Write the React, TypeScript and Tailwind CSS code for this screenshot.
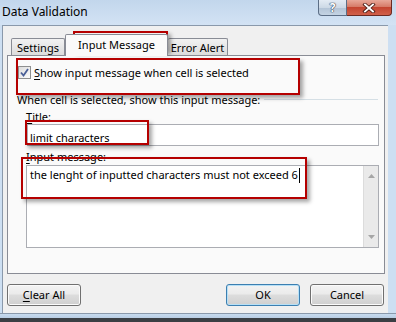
import React from "react";

const font = { fontFamily: '"Noto Sans", "Open Sans", sans-serif' };

function RedBox({ className }: { className: string }) {
  return (
    <div
      className={`absolute border-2 border-[#b50000] shadow-[3px_3px_4px_rgba(0,0,0,0.35)] pointer-events-none ${className}`}
    />
  );
}

function WinButton({
  label,
  accel,
  focused,
}: {
  label: string;
  accel?: boolean;
  focused?: boolean;
}) {
  return (
    <button
      className={`w-[74px] h-[22px] rounded-[3px] border text-[11px] text-black flex items-center justify-center bg-[#e5e5e5] bg-[linear-gradient(to_bottom,#f3f3f3_0%,#ebebeb_45%,#dddddd_50%,#cfcfcf_100%)] ${
        focused
          ? "border-[#3c7fb1] shadow-[inset_0_0_0_1px_#b7e0f6]"
          : "border-[#707070] shadow-[inset_0_0_0_1px_#fbfbfb]"
      }`}
    >
      {accel ? (
        <>
          <span className="underline underline-offset-2">{label[0]}</span>
          {label.slice(1)}
        </>
      ) : (
        label
      )}
    </button>
  );
}

export default function App() {
  return (
    <div
      className="relative w-[396px] h-[322px] overflow-hidden bg-[#cddff2] text-black"
      style={font}
    >
      {/* title bar */}
      <div className="h-[25px] flex items-start justify-between bg-[#cadcf0] bg-[linear-gradient(to_bottom,#c2d6ec,#d3e3f4)]">
        <div className="pl-[2px] pt-[3px] text-[12px] leading-[18px] text-black">
          Data Validation
        </div>
        <div className="flex mr-[4px]">
          <div className="w-[29px] h-[16px] rounded-bl-[4px] border border-t-0 border-[#5c6e86] bg-[#c6d4e4] bg-[linear-gradient(to_bottom,#e3ebf4_0%,#cdd9e6_50%,#b2c3d6_51%,#c4d3e3_100%)] flex items-center justify-center">
            <span className="text-[12px] font-bold leading-none text-white [text-shadow:0_0_1px_#2c3c52,0_0_1px_#2c3c52,0_0_1px_#2c3c52]">
              ?
            </span>
          </div>
          <div className="w-[45px] h-[16px] rounded-br-[4px] border border-l-0 border-t-0 border-[#6b2a22] bg-[#c9503d] bg-[linear-gradient(to_bottom,#e8a899_0%,#d67b68_45%,#c44530_50%,#d0604a_100%)] flex items-center justify-center">
            <svg width="14" height="10" viewBox="0 0 14 10">
              <path
                d="M3 1.5 L11 8.5 M11 1.5 L3 8.5"
                stroke="#4a1c14"
                strokeWidth="3.6"
                strokeLinecap="square"
              />
              <path
                d="M3 1.5 L11 8.5 M11 1.5 L3 8.5"
                stroke="#ffffff"
                strokeWidth="1.9"
                strokeLinecap="square"
              />
            </svg>
          </div>
        </div>
      </div>

      {/* dialog body */}
      <div className="ml-[2px] w-[386px] h-[288px] bg-[#f0f0f0] border-t border-l border-[#8a99ab] px-[4px]">
        {/* tabs */}
        <div className="h-[29px] flex items-end pl-[4px] text-[11px]">
          <div className="w-[54px] h-[17px] border border-b-0 border-[#898c95] rounded-t-[2px] bg-[#e8e8e8] bg-[linear-gradient(to_bottom,#f2f2f2,#dcdcdc)] flex items-center justify-center leading-none">
            Settings
          </div>
          <div className="relative z-10 -mb-px w-[103px] h-[22px] border border-b-0 border-[#898c95] rounded-t-[2px] bg-[#fafafa] flex items-center justify-center pb-[2px] leading-none">
            Input Message
          </div>
          <div className="w-[60px] h-[17px] border border-b-0 border-l-0 border-[#898c95] rounded-t-[2px] bg-[#e8e8e8] bg-[linear-gradient(to_bottom,#f2f2f2,#dcdcdc)] flex items-center justify-center leading-none">
            Error Alert
          </div>
        </div>

        {/* tab page */}
        <div className="w-[378px] h-[219px] border border-[#898c95] bg-[#fafafa] text-[11px] flex flex-col">
          <div className="flex items-center h-[14px] mt-[9px] ml-[10px]">
            <div className="w-[13px] h-[13px] border border-[#8e8f8f] bg-[#eeeeee] bg-[linear-gradient(135deg,#dcdcdc,#fcfcfc)] flex items-center justify-center">
              <svg width="9" height="9" viewBox="0 0 9 9">
                <path
                  d="M1 4.5 L3.5 7.5 L8 1"
                  fill="none"
                  stroke="#4a5f97"
                  strokeWidth="1.8"
                />
              </svg>
            </div>
            <span className="ml-[3px] leading-none">
              <span className="underline underline-offset-2">S</span>how input
              message when cell is selected
            </span>
          </div>

          <div className="flex items-center mt-[13px] ml-[9px] mr-[6px] h-[14px]">
            <span className="leading-none whitespace-nowrap">
              When cell is selected, show this input message:
            </span>
            <div className="flex-1 h-px bg-[#d5dfe5] ml-[4px]" />
          </div>

          <div className="ml-[18px] mt-[5px] leading-none">
            <span className="underline underline-offset-2">T</span>itle:
          </div>
          <div className="ml-[19px] mt-[2px] w-[352px] h-[22px] border border-[#abadb3] bg-white flex items-center pl-[2px] pt-[4px] leading-none">
            limit characters
          </div>

          <div className="ml-[18px] mt-[5px] leading-none">
            <span className="underline underline-offset-2">I</span>nput message:
          </div>
          <div className="ml-[18px] mt-[3px] w-[353px] h-[83px] border border-[#abadb3] bg-white flex">
            <div className="flex-1 pl-[3px] pt-[2px] leading-[14px] flex items-start">
              <span>the lenght of inputted characters must not exceed 6</span>
              <span className="w-px h-[15px] bg-black ml-px" />
            </div>
            <div className="w-[15px] h-full bg-[#eaeaea] border-l border-[#dcdcdc] flex flex-col items-center justify-between py-[8px]">
              <svg width="7" height="4" viewBox="0 0 7 4">
                <path d="M0 4 L3.5 0 L7 4 Z" fill="#a6a6a6" />
              </svg>
              <svg width="7" height="4" viewBox="0 0 7 4">
                <path d="M0 0 L3.5 4 L7 0 Z" fill="#a6a6a6" />
              </svg>
            </div>
          </div>
        </div>

        {/* buttons */}
        <div className="flex items-center mt-[10px]">
          <WinButton label="Clear All" accel />
          <div className="flex-1" />
          <WinButton label="OK" focused />
          <div className="w-[10px]" />
          <WinButton label="Cancel" />
        </div>
      </div>

      {/* bottom frame */}
      <div className="h-[5px] bg-[#c0d4ea] bg-[linear-gradient(to_bottom,#c7dbef,#b9cde3)] border-t border-[#8a99ab]" />
      <div className="h-[4px] bg-[#3b3f44]" />

      {/* annotation boxes */}
      <RedBox className="left-[73px] top-[31px] w-[95px] h-[20px]" />
      <RedBox className="left-[16px] top-[58px] w-[284px] h-[37px]" />
      <RedBox className="left-[25px] top-[120px] w-[124px] h-[25px]" />
      <RedBox className="left-[21px] top-[157px] w-[286px] h-[42px]" />
    </div>
  );
}
